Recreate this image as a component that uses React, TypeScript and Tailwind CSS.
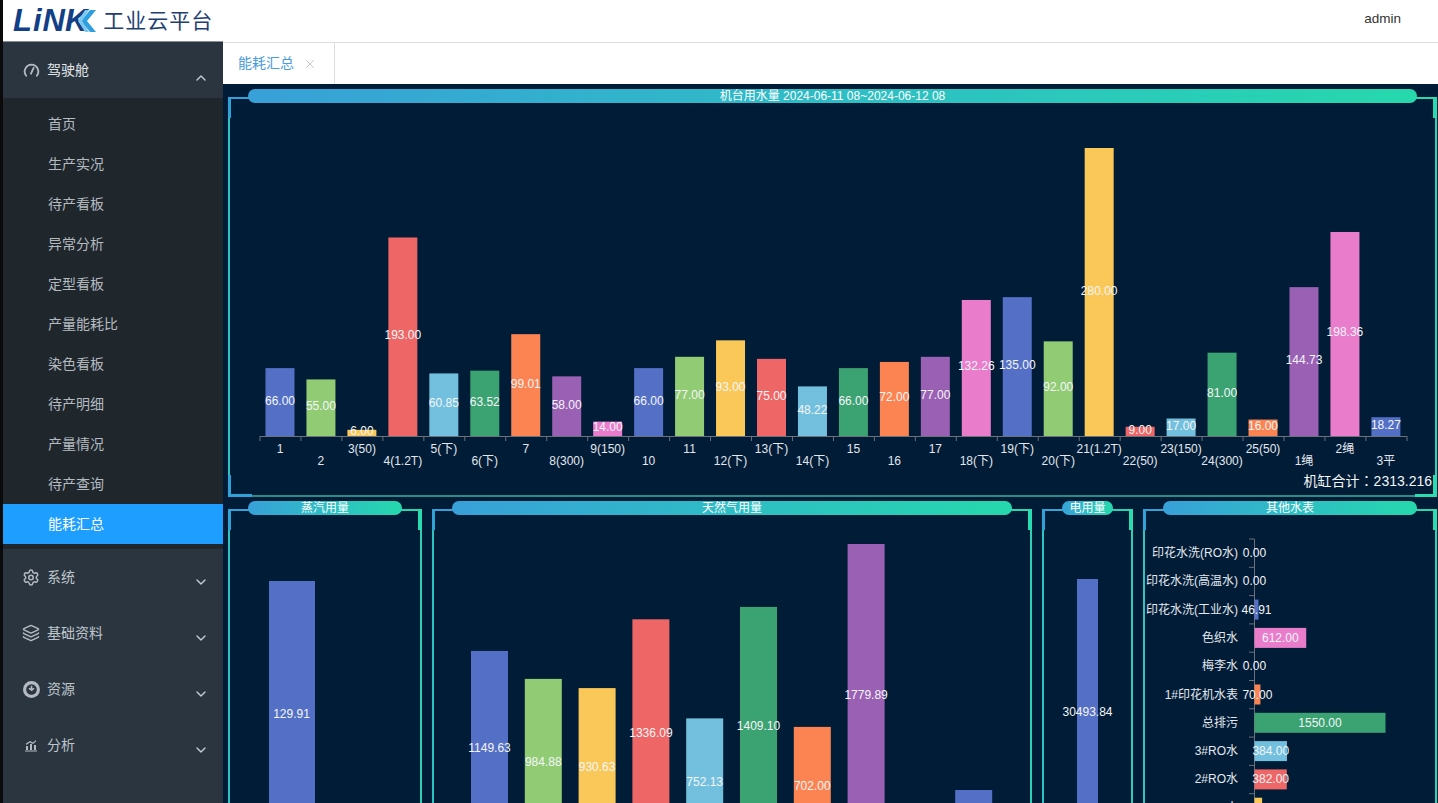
import type { ReactNode } from 'react'
import { ChevronDown, ChevronUp, Layers, Settings, X } from 'lucide-react'

const COLORS = ['#5470c6', '#91cc75', '#fac858', '#ee6666', '#73c0de', '#3ba272', '#fc8452', '#9a60b4', '#ea7ccc']

const machines: [string, number][] = [
  ['1', 66], ['2', 55], ['3(50)', 6], ['4(1.2T)', 193], ['5(下)', 60.85], ['6(下)', 63.52], ['7', 99.01],
  ['8(300)', 58], ['9(150)', 14], ['10', 66], ['11', 77], ['12(下)', 93], ['13(下)', 75], ['14(下)', 48.22],
  ['15', 66], ['16', 72], ['17', 77], ['18(下)', 132.26], ['19(下)', 135], ['20(下)', 92], ['21(1.2T)', 280],
  ['22(50)', 9], ['23(150)', 17], ['24(300)', 81], ['25(50)', 16], ['1绳', 144.73], ['2绳', 198.36], ['3平', 18.27],
]

const gas = [1149.63, 984.88, 930.63, 1336.09, 752.13, 1409.1, 702, 1779.89, 0, 330]

const otherWater: [string, number, string][] = [
  ['印花水洗(RO水)', 0, COLORS[0]],
  ['印花水洗(高温水)', 0, COLORS[0]],
  ['印花水洗(工业水)', 46.91, COLORS[0]],
  ['色织水', 612, COLORS[8]],
  ['梅李水', 0, COLORS[7]],
  ['1#印花机水表', 70, COLORS[6]],
  ['总排污', 1550, COLORS[5]],
  ['3#RO水', 384, COLORS[4]],
  ['2#RO水', 382, COLORS[3]],
  ['1#RO水', 90, COLORS[2]],
]

const subMenu = ['首页', '生产实况', '待产看板', '异常分析', '定型看板', '产量能耗比', '染色看板', '待产明细', '产量情况', '待产查询', '能耗汇总']

function GaugeIcon() {
  return (
    <svg width="17" height="17" viewBox="0 0 16 16" fill="none" stroke="currentColor" strokeWidth="1.7" strokeLinecap="round">
      <path d="M3 13A6.5 6.5 0 0 1 8 2.5a6.5 6.5 0 0 1 5 10.500" />
      <path d="M7.500 11 10 5.500" />
    </svg>
  )
}

function ClockIcon() {
  return (
    <svg width="17" height="17" viewBox="0 0 16 16">
      <circle cx="8" cy="8" r="8" fill="currentColor" />
      <circle cx="8" cy="8" r="5" fill="#2a3540" />
      <path d="M8 4.500V8.500L5.500 7M8 8.500l2.500-1.500" fill="none" stroke="currentColor" strokeWidth="1.500" />
    </svg>
  )
}

function ChartIcon() {
  return (
    <svg width="14" height="14" viewBox="0 0 14 14" fill="currentColor">
      <path d="M1 12.500h12v1H1zM2 8h2v4H2zM6 6h2v6H6zM10 7h2v5h-2z" />
      <path d="M2 5.500 6 3l3 1.500L12 2v1.500L9 6 6 4.500 2 7z" />
    </svg>
  )
}

function MenuHead({ icon, label, open }: { icon: ReactNode; label: string; open?: boolean }) {
  return (
    <div className={`relative flex h-[56px] items-center bg-[#2a3540] pl-[19px] text-[14px] ${open ? 'text-[#e4e7ea]' : 'text-[#bfc5cb]'}`}>
      <span className="flex w-[18px] justify-center text-[#b4bac0]">{icon}</span>
      <span className="ml-[7px]">{label}</span>
      <span className={`absolute right-[14px] text-[#c8cdd2] ${open ? 'top-[28px]' : 'top-[25px]'}`}>
        {open ? <ChevronUp size={16} /> : <ChevronDown size={16} />}
      </span>
    </div>
  )
}

function Sidebar() {
  return (
    <aside className="flex min-h-0 w-[220px] flex-1 flex-col bg-[#2a3540]">
      <MenuHead icon={<GaugeIcon />} label="驾驶舱" open />
      <div className="bg-[#1f272d] pb-[5px] pt-[6px]">
        {subMenu.map(item => (
          <div
            key={item}
            className={`flex h-[40px] items-center pl-[45px] text-[14px] ${item === '能耗汇总' ? 'bg-[#1e9fff] text-white' : 'text-[#b4bac0]'}`}
          >
            {item}
          </div>
        ))}
      </div>
      <MenuHead icon={<Settings size={19} />} label="系统" />
      <MenuHead icon={<Layers size={18} />} label="基础资料" />
      <MenuHead icon={<ClockIcon />} label="资源" />
      <MenuHead icon={<ChartIcon />} label="分析" />
    </aside>
  )
}

function Logo() {
  return (
    <div className="flex h-[42px] w-[220px] shrink-0 items-center border-b border-[#8a8f96] bg-white pl-[10px]">
      <span className="text-[31px] font-bold italic leading-none tracking-[1px] text-[#123f86]">LiN</span>
      <span className="-ml-[1px] text-[31px] font-bold italic leading-none text-[#123f86]">K</span>
      <svg width="20" height="24" viewBox="0 0 20 24" className="-ml-[10px]">
        <path d="M19 1H13L4 12l9 11h6L10 12z" fill="#2f9fe0" />
        <path d="M12 1H8L1 12l7 11h4L5 12z" fill="#7cc8ee" />
      </svg>
      <span className="ml-[6px] text-[21px] leading-none tracking-[1px] text-[#1f3f72]">工业云平台</span>
    </div>
  )
}

function Panel({ title, className, children }: { title: string; className: string; children: ReactNode }) {
  return (
    <section className={`relative shrink-0 border-2 border-t-transparent border-l-[#2cc4c0] border-r-[#30ceb4] border-b-[#2a8c8a] ${className}`}>
      <div className="absolute -top-[2px] left-0 right-0 h-[2px] bg-gradient-to-r from-[#35a0d8] to-[#2ad8ae]" />
      <div className="absolute -left-[2px] -top-[2px] h-[21px] w-[3px] bg-[#2fa3d8]" />
      <div className="absolute -right-[2px] -top-[2px] h-[21px] w-[4px] bg-[#2bdcb0]" />
      <div className="absolute -top-[10px] left-[18px] right-[18px] h-[14px] rounded-full bg-gradient-to-r from-[#38a0d8] to-[#26d8ac] text-center text-[12px] leading-[14px] text-white">
        {title}
      </div>
      {children}
    </section>
  )
}

const labelProps = { fill: '#f4f6f8', fontSize: 12, textAnchor: 'middle' as const }

function MachineChart() {
  const step = 40.96
  const scale = 288 / 280
  return (
    <svg className="block" width="1205" height="398" viewBox="230 99 1205 398">
      {machines.map(([name, value], i) => {
        const cx = 259.500 + step * (i + 0.5)
        const h = value * scale
        return (
          <g key={name}>
            <rect x={cx - 14.500} y={436 - h} width="29" height={h} fill={COLORS[i % 9]} />
            <text {...labelProps} x={cx} y={436 - h / 2 + 2.500}>{value.toFixed(2)}</text>
            <text {...labelProps} fill="#e3e8ee" x={cx} y={i % 2 ? 465 : 453}>{name}</text>
            <line x1={260 + step * i} x2={260 + step * i} y1="436" y2="441" stroke="#6e7079" />
          </g>
        )
      })}
      <line x1="1407" x2="1407" y1="436" y2="441" stroke="#6e7079" />
      <line x1="260" x2="1407" y1="436.500" y2="436.500" stroke="#6e7079" />
      <text x="1432" y="486" fill="#f4f6f8" fontSize="14" textAnchor="end" className="font-['Liberation_Sans','Noto_Sans_CJK_TC',sans-serif]">机缸合计：2313.216</text>
    </svg>
  )
}

function SteamChart() {
  return (
    <svg className="block" width="190" height="360" viewBox="230 511 190 360">
      <rect x="269" y="581" width="46" height="266" fill={COLORS[0]} />
      <text {...labelProps} x="291.500" y="718">129.91</text>
    </svg>
  )
}

function GasChart() {
  const step = 53.8
  const scale = 302 / 1779.89
  return (
    <svg className="block" width="596" height="360" viewBox="434 511 596 360">
      {gas.map((value, i) => {
        const cx = 489.500 + step * i
        const h = value * scale
        if (!value) return null
        return (
          <g key={i}>
            <rect x={cx - 18.500} y={846 - h} width="37" height={h} fill={COLORS[i === 9 ? 0 : i % 9]} />
            {i < 9 && <text {...labelProps} x={cx} y={846 - h / 2 + 4}>{value.toFixed(2)}</text>}
          </g>
        )
      })}
    </svg>
  )
}

function PowerChart() {
  return (
    <svg className="block" width="87" height="360" viewBox="1044 511 87 360">
      <rect x="1077" y="579" width="21" height="270" fill={COLORS[0]} />
      <text {...labelProps} x="1087.500" y="716">30493.84</text>
    </svg>
  )
}

function OtherWaterChart() {
  const step = 28.3
  const scale = 131 / 1550
  return (
    <svg className="block" width="290" height="360" viewBox="1145 511 290 360">
      <line x1="1254.500" x2="1254.500" y1="539" y2="860" stroke="#6e7079" />
      {otherWater.map(([name, value, color], i) => {
        const cy = 553 + step * i
        const w = value * scale
        return (
          <g key={name}>
            <line x1="1249" x2="1254" y1={539 + step * i} y2={539 + step * i} stroke="#6e7079" />
            <rect x="1254.500" y={cy - 10} width={w} height="20" fill={color} />
            <text {...labelProps} fill="#e3e8ee" x="1238" y={cy + 4} textAnchor="end">{name}</text>
            <text {...labelProps} x={1254.500 + w / 2} y={cy + 4}>{value.toFixed(2)}</text>
          </g>
        )
      })}
    </svg>
  )
}

export default function App() {
  return (
    <div className="flex h-[803px] w-[1438px] overflow-hidden bg-[#0a0a0a] pl-[3px] font-['Liberation_Sans','Noto_Sans_CJK_SC',sans-serif]">
      <div className="flex w-[220px] shrink-0 flex-col">
        <Logo />
        <Sidebar />
      </div>
      <div className="flex min-w-0 flex-1 flex-col">
        <header className="flex h-[43px] shrink-0 items-center justify-end border-b border-[#dcdfe2] bg-white pb-[3px] pr-[37px] text-[13.5px] text-[#333]">
          admin
        </header>
        <div className="flex h-[41px] shrink-0 bg-white pl-[1px]">
          <div className="flex w-[111px] items-center border-r border-[#dcdfe2] pl-[14px] text-[14px] text-[#4a9bdc]">
            能耗汇总
            <X size={14} strokeWidth={1.5} className="ml-[9px] text-[#b8bcc2]" />
          </div>
        </div>
        <main className="min-h-0 flex-1 overflow-hidden bg-[#011c37] pl-[5px] pt-[13px]">
          <Panel title="机台用水量 2024-06-11 08~2024-06-12 08" className="h-[400px] w-[1209px]">
            <div className="absolute -bottom-[2px] -left-[2px] h-[22px] w-[3px] bg-[#2fa3d8]" />
            <div className="absolute -bottom-[2px] -left-[2px] h-[3px] w-[24px] bg-[#2fa3d8]" />
            <div className="absolute -bottom-[2px] -right-[2px] h-[22px] w-[4px] bg-[#2bdcb0]" />
            <div className="absolute -bottom-[2px] -right-[2px] h-[3px] w-[22px] bg-[#2bdcb0]" />
            <MachineChart />
          </Panel>
          <div className="mt-[12px] flex gap-[10px]">
            <Panel title="蒸汽用量" className="h-[400px] w-[194px]"><SteamChart /></Panel>
            <Panel title="天然气用量" className="h-[400px] w-[600px]"><GasChart /></Panel>
            <Panel title="电用量" className="h-[400px] w-[91px]"><PowerChart /></Panel>
            <Panel title="其他水表" className="h-[400px] w-[294px]"><OtherWaterChart /></Panel>
          </div>
        </main>
      </div>
    </div>
  )
}
